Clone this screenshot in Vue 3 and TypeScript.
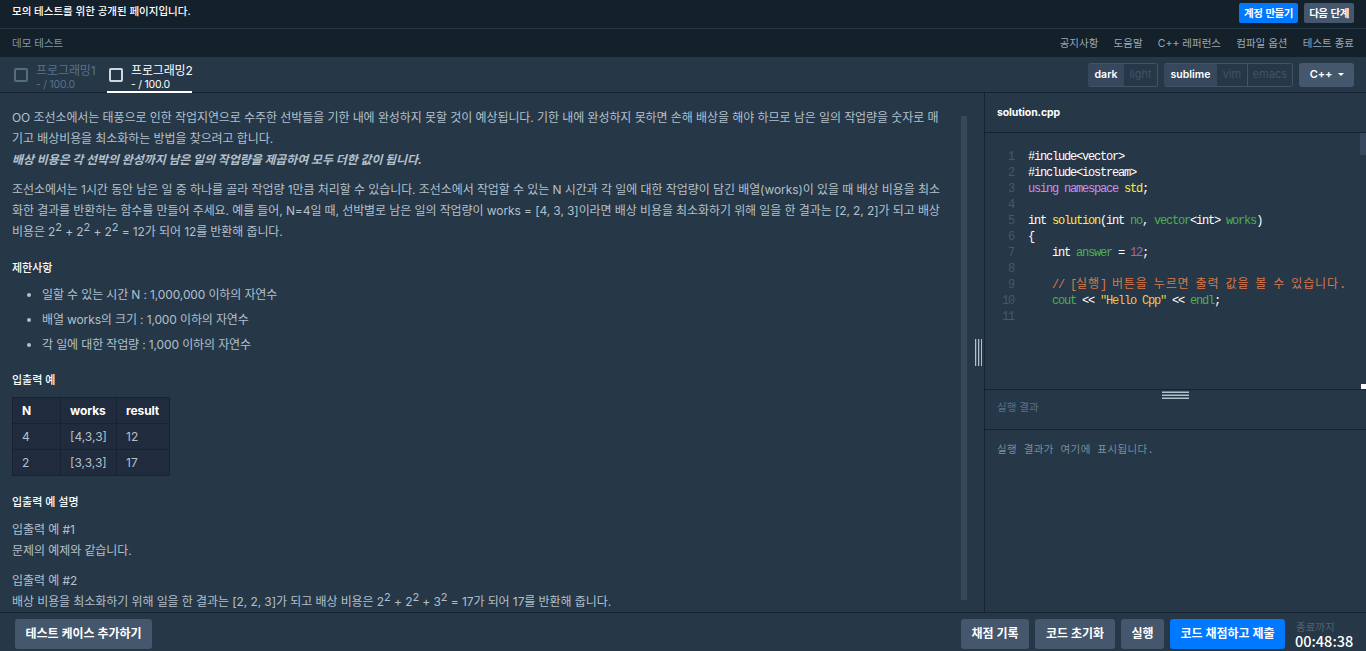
<script setup lang="ts">
import { ref } from 'vue'

type Token = [string, string]

const links: string[] = ['공지사항', '도움말', 'C++ 레퍼런스', '컴파일 옵션', '테스트 종료']
const tabs = ref([
  { title: '프로그래밍1', score: '- / 100.0', active: false },
  { title: '프로그래밍2', score: '- / 100.0', active: true },
])
const limits: string[] = [
  '일할 수 있는 시간 N : 1,000,000 이하의 자연수',
  '배열 works의 크기 : 1,000 이하의 자연수',
  '각 일에 대한 작업량 : 1,000 이하의 자연수',
]
const rows: string[][] = [['4', '[4,3,3]', '12'], ['2', '[3,3,3]', '17']]
const code: Token[][] = [
  [['w', '#include<vector>']],
  [['w', '#include<iostream>']],
  [['k', 'using namespace '], ['y', 'std'], ['w', ';']],
  [],
  [['w', 'int '], ['y', 'solution'], ['w', '(int '], ['g', 'no'], ['w', ', '], ['g', 'vector'], ['w', '<int> '], ['g', 'works'], ['w', ')']],
  [['w', '{']],
  [['w', '    int '], ['g', 'answer'], ['w', ' = '], ['n', '12'], ['w', ';']],
  [],
  [['c', '    // ['], ['c ko', '실행'], ['c', '] '], ['c ko', '버튼을 누르면 출력 값을 볼 수 있습니다.']],
  [['g', '    cout'], ['w', ' << '], ['s', '"Hello Cpp"'], ['w', ' << '], ['g', 'endl'], ['w', ';']],
  [],
]
</script>

<template>
  <div class="page">
    <div class="notice">
      <strong>모의 테스트를 위한 공개된 페이지입니다.</strong>
      <div class="notice-btns">
        <button class="btn sm primary signup">계정 만들기</button>
        <button class="btn sm next">다음 단계</button>
      </div>
    </div>
    <header class="header">
      <span class="name">데모 테스트</span>
      <nav><a v-for="l in links" :key="l">{{ l }}</a></nav>
    </header>
    <div class="toolbar">
      <div class="tabs">
        <div v-for="t in tabs" :key="t.title" class="tab" :class="{ active: t.active }">
          <i class="box"></i>
          <div class="tab-text"><span class="tt">{{ t.title }}</span><span class="ts">{{ t.score }}</span></div>
        </div>
      </div>
      <div class="options">
        <div class="group theme"><span class="on w36">dark</span><span class="last">light</span></div>
        <div class="group keys"><span class="on w53">sublime</span><span class="w30">vim</span><span class="last">emacs</span></div>
        <button class="btn lang">C++ <i class="caret"></i></button>
      </div>
    </div>
    <main class="main">
      <section class="guide">
        <div class="doc">
          <p>
            <span class="ln l1">OO 조선소에서는 태풍으로 인한 작업지연으로 수주한 선박들을 기한 내에 완성하지 못할 것이 예상됩니다. 기한 내에 완성하지 못하면 손해 배상을 해야 하므로 남은 일의 작업량을 숫자로 매</span>
            <span class="ln">기고 배상비용을 최소화하는 방법을 찾으려고 합니다.</span>
            <em class="ln">배상 비용은 각 선박의 완성까지 남은 일의 작업량을 제곱하여 모두 더한 값이 됩니다.</em>
          </p>
          <p>
            <span class="ln">조선소에서는 1시간 동안 남은 일 중 하나를 골라 작업량 1만큼 처리할 수 있습니다. 조선소에서 작업할 수 있는 N 시간과 각 일에 대한 작업량이 담긴 배열(works)이 있을 때 배상 비용을 최소</span>
            <span class="ln l5">화한 결과를 반환하는 함수를 만들어 주세요. 예를 들어, N=4일 때, 선박별로 남은 일의 작업량이 works = [4, 3, 3]이라면 배상 비용을 최소화하기 위해 일을 한 결과는 [2, 2, 2]가 되고 배상</span>
            <span class="ln l6">비용은 2<sup>2</sup> + 2<sup>2</sup> + 2<sup>2</sup> = 12가 되어 12를 반환해 줍니다.</span>
          </p>
          <h5>제한사항</h5>
          <ul><li v-for="l in limits" :key="l">{{ l }}</li></ul>
          <h5>입출력 예</h5>
          <table>
            <thead><tr><th>N</th><th>works</th><th>result</th></tr></thead>
            <tbody><tr v-for="r in rows" :key="r[0]"><td v-for="c in r" :key="c">{{ c }}</td></tr></tbody>
          </table>
          <h5>입출력 예 설명</h5>
          <p>
            <span class="ln">입출력 예 #1</span>
            <span class="ln">문제의 예제와 같습니다.</span>
          </p>
          <p>
            <span class="ln">입출력 예 #2</span>
            <span class="ln l7">배상 비용을 최소화하기 위해 일을 한 결과는 [2, 2, 3]가 되고 배상 비용은 2<sup>2</sup> + 2<sup>2</sup> + 3<sup>2</sup> = 17가 되어 17를 반환해 줍니다.</span>
          </p>
        </div>
        <div class="track"></div>
        <div class="gutter">
          <svg width="8" height="27" viewBox="0 0 8 27" shape-rendering="crispEdges">
            <path d="M.5 0V27M3.5 0V27M6.5 0V27" stroke="#b2c0cc" />
            <path d="M1.5 0V27M4.5 0V27" stroke="#4b5b69" />
          </svg>
        </div>
      </section>
      <section class="work">
        <div class="file">solution.cpp</div>
        <div class="editor">
          <div class="code">
            <div v-for="(line, i) in code" :key="i" class="row">
              <span class="no">{{ i + 1 }}</span>
              <pre><span v-for="(t, j) in line" :key="j" :class="t[0]">{{ t[1] }}</span></pre>
            </div>
          </div>
          <div class="thumb"></div>
          <div class="corner"></div>
        </div>
        <div class="result-head">
          <span>실행 결과</span>
          <svg class="hgrip" width="27" height="8" viewBox="0 0 27 8" shape-rendering="crispEdges">
            <path d="M0 .5H27M0 3.5H27M0 6.5H27" stroke="#6c7c89" />
            <path d="M0 1.5H27M0 4.5H27M0 7.5H27" stroke="#b2c0cc" />
          </svg>
        </div>
        <div class="result">실행 결과가 여기에 표시됩니다.</div>
      </section>
    </main>
    <footer class="footer">
      <button class="btn lg b1">테스트 케이스 추가하기</button>
      <div class="actions">
        <button class="btn lg b2">채점 기록</button>
        <button class="btn lg b3">코드 초기화</button>
        <button class="btn lg b4">실행</button>
        <button class="btn lg primary b5">코드 채점하고 제출</button>
        <div class="timer"><span>종료까지</span><b>00:48:38</b></div>
      </div>
    </footer>
  </div>
</template>

<style>
html, body { margin: 0; background: #263747; overflow: hidden; }
</style>

<style scoped>
* { box-sizing: border-box; }
.page {
  display: flex; flex-direction: column; width: 1366px; height: 651px; overflow: hidden;
  background: #263747; color: #b2c0cc; white-space: nowrap;
  font: 12px/21px Inter, "Noto Sans CJK KR", sans-serif;
}
.notice {
  flex: none; height: 29px; padding: 3px 12px 0; display: flex; justify-content: space-between; align-items: flex-start;
  background: #14202a; border-bottom: 1px solid #263747; color: #fff; font-size: 10.5px;
}
.notice strong { font-weight: 500; line-height: 17px; }
.notice-btns { display: flex; gap: 6px; }
.btn {
  border: 0; padding: 0; border-radius: 3px; background: #44576c; color: #fff; text-align: center;
  font-family: inherit; font-weight: 700; white-space: nowrap;
}
.btn.primary { background: #0078ff; }
.btn.sm { height: 20px; padding-top: 1px; font-size: 10.5px; line-height: 19px; letter-spacing: -.5px; word-spacing: 1px; border-radius: 2px; }
.signup { width: 59px; }
.next { width: 50px; }
.header {
  flex: none; height: 28px; padding: 1px 12px 0; display: flex; justify-content: space-between;
  background: #14202a; color: #98a8b9; font-size: 10.5px; line-height: 28px;
}
.name { color: #8097a4; }
.header nav { display: flex; gap: 15.25px; }
.toolbar {
  flex: none; height: 36px; padding: 0 12px; display: flex; justify-content: space-between;
  border-bottom: 1px solid #172334;
}
.tabs { display: flex; gap: 9px; }
.tab { position: relative; display: flex; gap: 8px; height: 36px; padding: 5px 0 0 2px; color: #587389; }
.tab .box { width: 14px; height: 14px; margin-top: 6px; border: 2px solid #546e7f; border-radius: 2px; }
.tab.active { color: #fff; border-bottom: 2px solid #fff; }
.tab.active .box { border-color: #cfd6dc; }
.tab-text { display: flex; flex-direction: column; width: 61px; padding-top: 1px; letter-spacing: -.08px; }
.tab.active .tab-text { letter-spacing: -.15px; }
.tab:first-child .tab-text { width: 62px; margin-right: 0; }
.tt { font-size: 12px; line-height: 15px; }
.ts { font-size: 10.5px; line-height: 14px; letter-spacing: -.25px; }
.options { display: flex; gap: 6px; padding-top: 6px; font-size: 11px; }
.group { display: flex; height: 24px; border: 1px solid #405367; border-left: 0; border-radius: 3px; overflow: hidden; color: #405468; }
.theme { width: 70px; }
.keys { width: 129px; }
.group span { flex: none; text-align: center; line-height: 21px; border-left: 1px solid #405367; }
.group .on { margin: -1px 0; padding-top: 1px; background: #37485d; color: #fff; font-size: 10.5px; font-weight: 600; border: 0; }
.group .on + span { border-left: 0; }
.group .last { flex: 1; }
.w36 { width: 36px; } .w53 { width: 53px; } .w30 { width: 30px; }
.lang { width: 55px; height: 24px; padding: 0 0 2px 1px; font-size: 11px; font-weight: 600; letter-spacing: -.2px; display: flex; align-items: center; justify-content: center; gap: 6px; }
.caret { border: 3px solid transparent; border-top-color: #fff; border-bottom: 0; }
.main { flex: none; height: 519px; display: flex; overflow: hidden; }
.guide { flex: none; width: 984px; display: flex; }
.doc { flex: none; width: 961px; padding: 14px 0 0 12px; }
.track { flex: none; width: 6px; height: 484px; margin-top: 23px; background: #37485d; }
.gutter { padding: 246px 0 0 8px; }
.gutter svg { display: block; }
p { margin: 0 0 9px; }
.ln { display: block; height: 21px; letter-spacing: -.075px; }
.l5 { letter-spacing: -.09px; }
.l7 { letter-spacing: -.083px; }
.l6 { letter-spacing: -.1px; }
em { font-weight: 700; }
sup { font-size: 11px; line-height: 0; vertical-align: 5px; }
h5 { margin: 18px 0 0; font-size: 11px; line-height: 16px; font-weight: 500; color: #fff; }
ul { margin: 8px 0 17px; padding-left: 30px; }
li { height: 21px; margin-bottom: 4px; letter-spacing: -.13px; }
li:last-child { margin-bottom: 0; }
ul + h5 { margin-top: 17px; }
table { margin: 9px 0 18px; border-collapse: collapse; table-layout: fixed; width: 158px; background: #202b3d; }
th, td { height: 26px; padding: 0 9px; border: 1px solid #172334; text-align: left; line-height: 25px; }
th { color: #fff; font-weight: 700; letter-spacing: -.1px; }
th:nth-child(1) { width: 48px; } th:nth-child(2) { width: 56px; }
h5 + p { margin-top: 9px; }
.work { flex: 1; border-left: 1px solid #172334; display: flex; flex-direction: column; }
.file { flex: none; height: 40px; padding-left: 12px; border-bottom: 1px solid #172334; font-size: 10.5px; line-height: 39px; font-weight: 700; letter-spacing: -.1px; color: #fff; }
.editor { position: relative; flex: none; height: 257px; padding-top: 16px; border-bottom: 1px solid #172334; }
.code { font: 12px/16px "Liberation Mono", "Noto Sans CJK KR", monospace; letter-spacing: -1.2px; }
.row { display: flex; height: 16px; }
.no { width: 29px; margin-right: 14px; text-align: right; color: #44576c; }
pre { margin: 0; font: inherit; }
.w { color: #fff; } .k { color: #c792ea; } .y { color: #ffeb3b; } .g { color: #4caf50; }
.n { color: #a5689b; } .s { color: #ecc94b; } .c { color: #d9774a; }
.ko { letter-spacing: .9px; word-spacing: -2.1px; }
.thumb { position: absolute; right: 0; top: 0; width: 6px; height: 22px; background: #37485d; }
.corner { position: absolute; right: 0; bottom: 0; width: 5px; height: 5px; background: #fff; }
.result-head { position: relative; flex: none; height: 40px; padding-left: 12px; border-bottom: 1px solid #172334; font-size: 10.5px; line-height: 35px; color: #587389; }
.hgrip { position: absolute; left: 177px; top: 1px; }
.result { padding: 11px 0 0 12px; font: 10.5px/18px "Liberation Mono", "Noto Sans CJK KR", monospace; letter-spacing: .38px; color: #78909c; }
.footer { flex: none; height: 39px; padding: 6px 12px 0 15px; display: flex; justify-content: space-between; border-top: 1px solid #172334; }
.actions { display: flex; gap: 6px; }
.btn.lg { height: 30px; font-size: 12px; line-height: 30px; }
.b1 { width: 137px; } .b2 { width: 68px; } .b3 { width: 80px; } .b4 { width: 43px; } .b5 { width: 115px; }
.timer { width: 59px; margin-left: 4px; display: flex; flex-direction: column; }
.timer span { padding-left: 1px; margin-top: 2px; font-size: 10.5px; line-height: 13px; color: #546270; }
.timer b { font: 500 14.5px/14px "Noto Sans CJK KR", sans-serif; color: #fff; }
</style>
